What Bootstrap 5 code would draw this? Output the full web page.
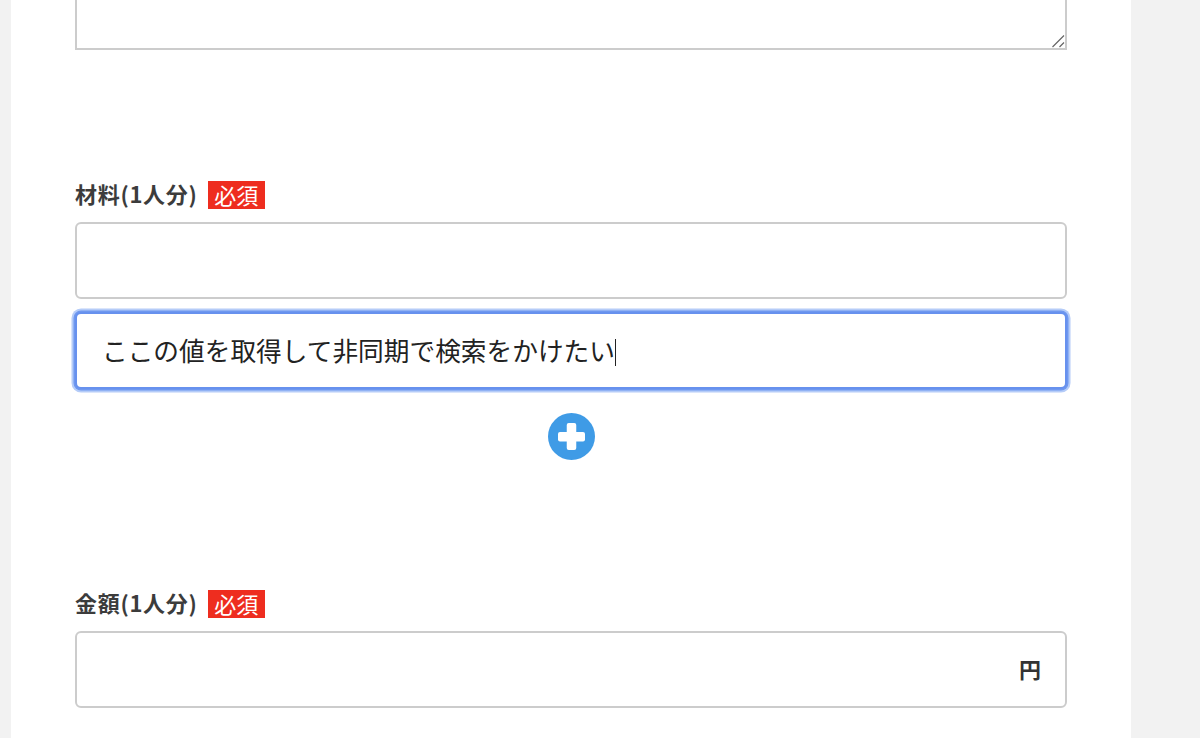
<!DOCTYPE html>
<html lang="ja">
<head>
<meta charset="utf-8">
<link href="https://cdn.jsdelivr.net/npm/bootstrap@5.3.0/dist/css/bootstrap.min.css" rel="stylesheet">
<style>
html,body{height:738px;overflow:hidden;background:#f2f2f2;font-family:"Noto Sans CJK JP","Liberation Sans",sans-serif;color:#333}
.sheet{width:1120px;height:738px;margin-left:11px;background:#fff;padding-left:64px;padding-right:64px;box-sizing:border-box}
.memo-wrap{width:992px;height:50px}
.memo{display:block;width:992px;height:50px;border:2px solid #ccc;border-top:0;border-radius:0;background:#fff;box-shadow:none;min-height:0;padding:0;resize:none}
.grip{right:2px;bottom:2px;width:14px;height:14px}
.field-label{height:28px;font-size:22px;font-weight:700;line-height:28px;color:#3c3c3c;gap:11px}
.label-text{letter-spacing:.7px;margin-right:-.7px;padding-bottom:4px}
.req{background:#ee2d1f;color:#fff;font-size:22px;font-weight:400;line-height:26px;height:28px;padding:0 6.5px}
.entry{height:77px;width:992px;border:2px solid #ccc;border-radius:6px;font-size:25.7px;padding:0 25px;color:#222;box-shadow:none}
.entry.on{border-color:#6791ee;box-shadow:0 0 0 1.5px #6f98ef,0 0 0 3.5px #b5ccf8;outline:0}
.caret{display:inline-block;width:1px;height:27px;background:#222;vertical-align:-5px}
.plus{width:47px;height:47px}
.yen{right:26px;top:-1px;height:77px;font-size:22px;font-weight:700;color:#333}
.sec-a{margin-top:131px}
.mt-first{margin-top:13px}
.mt-second{margin-top:13px}
.plus-row{margin-top:24px}
.sec-b{margin-top:130px}
</style>
</head>
<body>
<div class="sheet">
  <div class="memo-wrap position-relative">
    <textarea class="memo form-control"></textarea>
    <svg class="grip position-absolute" viewBox="0 0 14 14"><path d="M1.5 13 13 1.5M8.5 13 13 8.5" stroke="#666" stroke-width="1.2" fill="none"/></svg>
  </div>
  <section class="sec-a">
    <div class="field-label d-flex align-items-center"><span class="label-text">材料(1人分)</span><span class="req">必須</span></div>
    <div class="entry form-control d-flex align-items-center mt-first"></div>
    <div class="entry on form-control d-flex align-items-center mt-second"><span>ここの値を取得して非同期で検索をかけたい<span class="caret"></span></span></div>
    <div class="d-flex justify-content-center plus-row">
      <svg class="plus" viewBox="0 0 47 47"><circle cx="23.5" cy="23.5" r="23.5" fill="#3f9be6"/><rect x="10" y="19" width="27" height="9.5" rx="2" fill="#fff"/><rect x="18.75" y="10" width="9.5" height="27" rx="2" fill="#fff"/></svg>
    </div>
  </section>
  <section class="sec-b">
    <div class="field-label d-flex align-items-center"><span class="label-text">金額(1人分)</span><span class="req">必須</span></div>
    <div class="position-relative mt-first">
      <div class="entry form-control"></div>
      <span class="yen position-absolute d-flex align-items-center">円</span>
    </div>
  </section>
</div>
<script src="https://cdn.jsdelivr.net/npm/bootstrap@5.3.0/dist/js/bootstrap.bundle.min.js"></script>
</body>
</html>
